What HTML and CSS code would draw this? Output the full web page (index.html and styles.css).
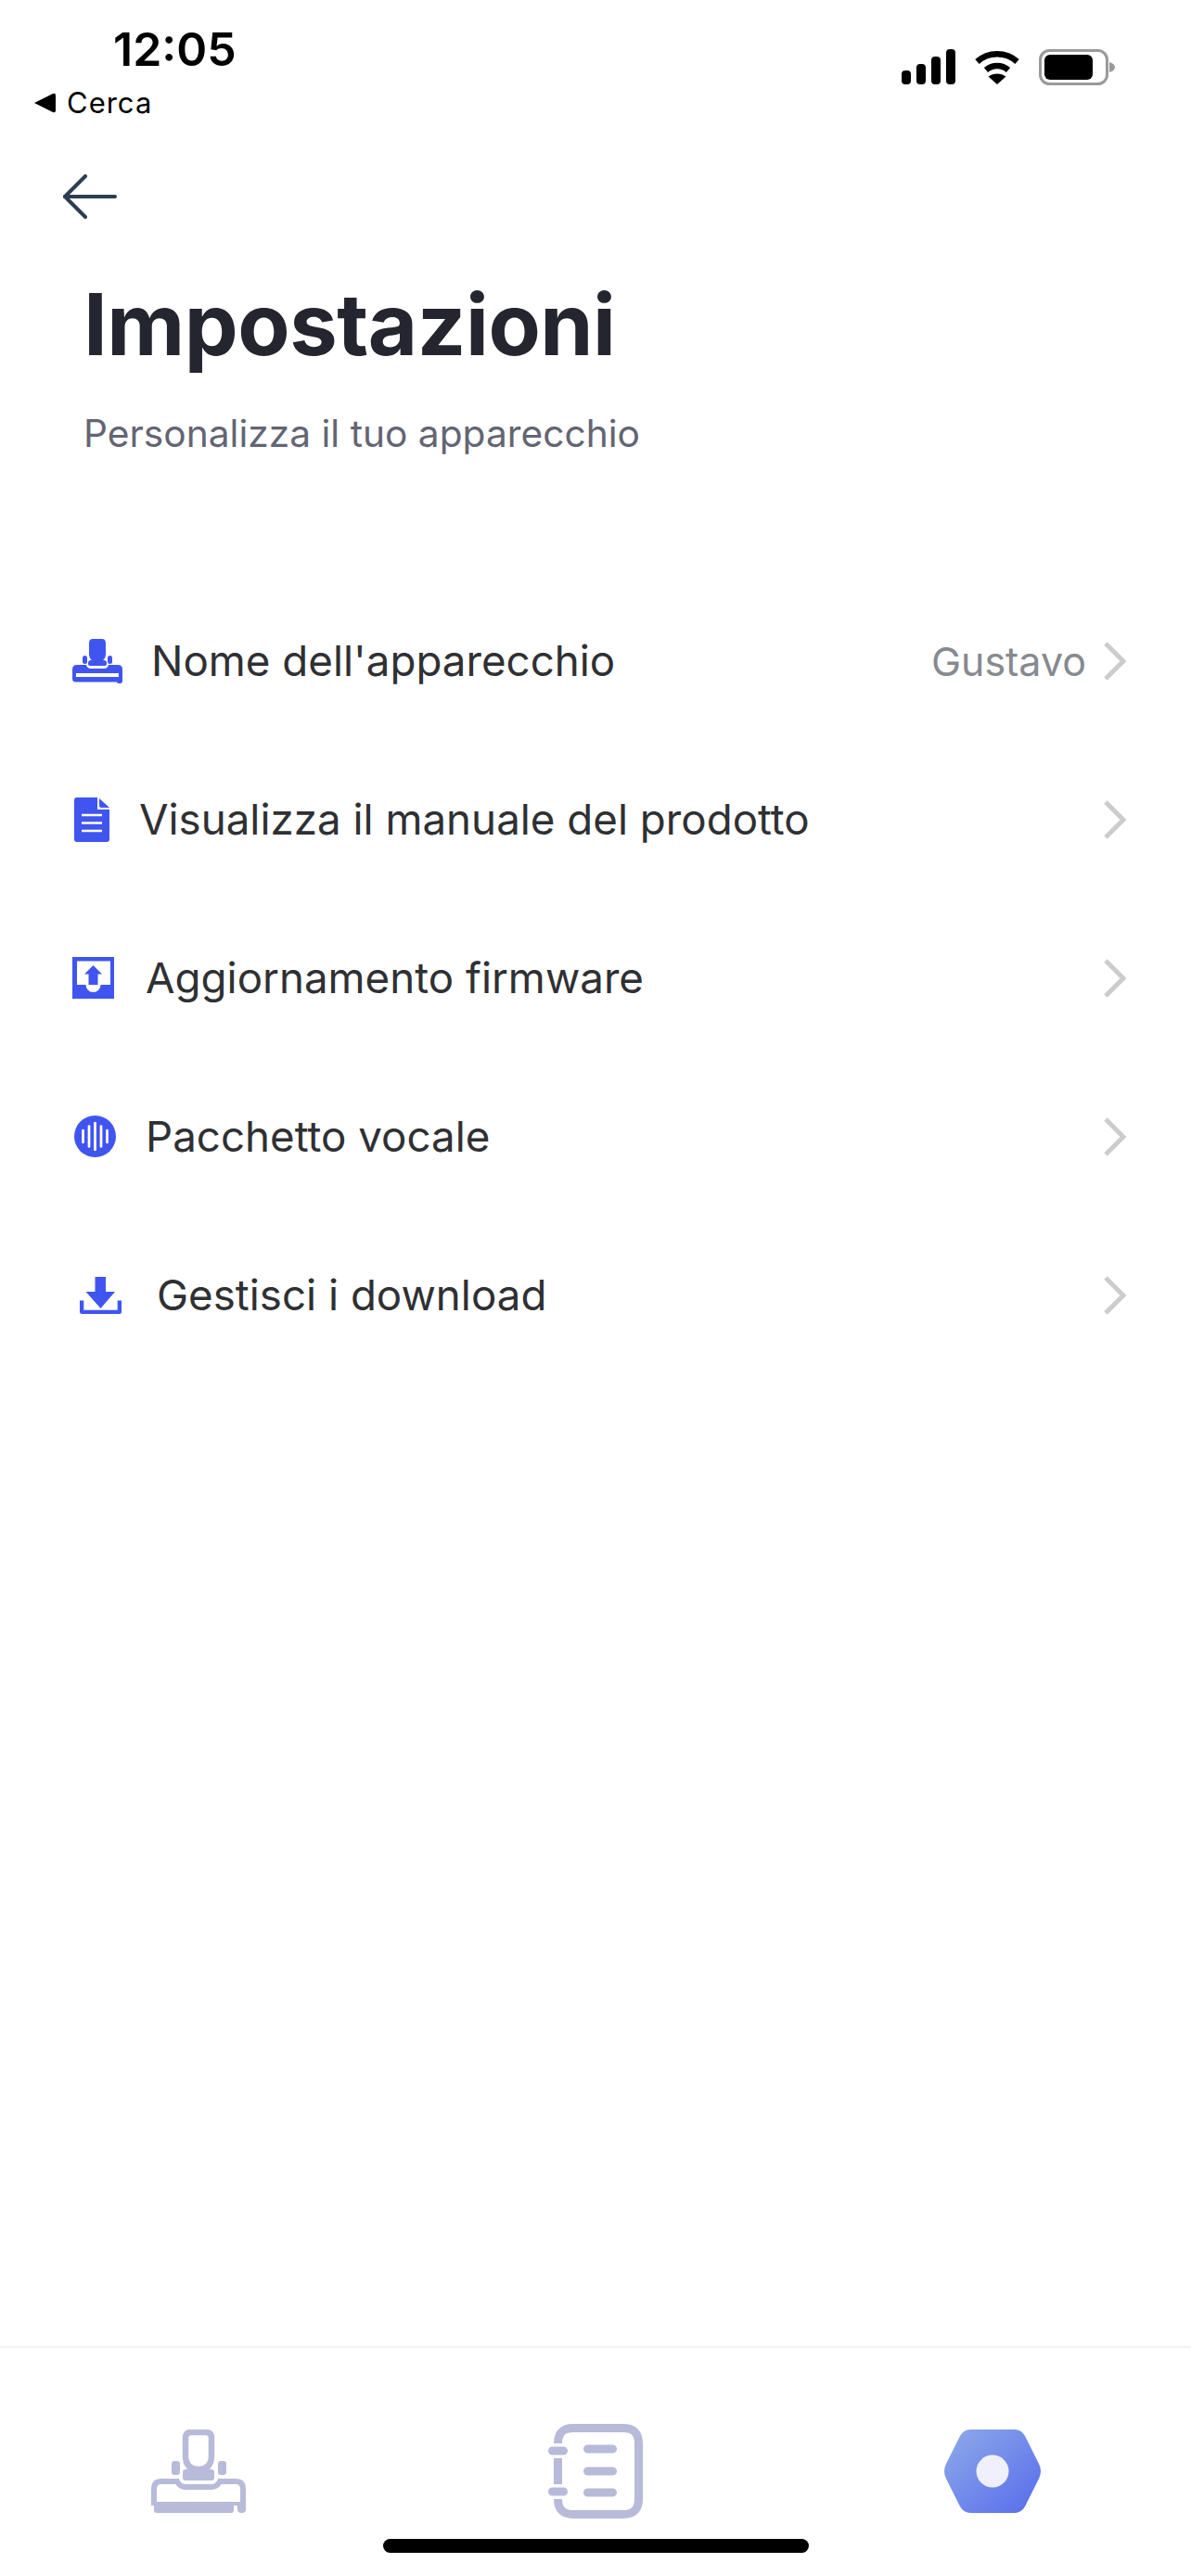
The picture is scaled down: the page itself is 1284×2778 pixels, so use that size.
FILE: index.html
```html
<!DOCTYPE html>
<html lang="it">
<head>
  <meta charset="UTF-8" />
  <meta name="viewport" content="width=device-width, initial-scale=1" />
  <title>Impostazioni</title>
  <link rel="stylesheet" href="styles.css">
</head>
<body>

<div class="app">
  <header class="status">
    <div class="status-left">
      <div class="time">12:05</div>
      <div class="back-app">
        <svg class="back-tri" width="23" height="22" viewBox="0 0 23 22"><path d="M0 11 L20 1 Q23 0 23 3 V19 Q23 22 20 21 Z" fill="#000"/></svg>
        <span>Cerca</span>
      </div>
    </div>
    <div class="status-right">
      <svg width="58" height="38" viewBox="0 0 58 38" fill="#000">
        <rect x="0" y="23" width="10" height="15" rx="4"/>
        <rect x="16" y="16" width="10" height="22" rx="4"/>
        <rect x="32" y="8" width="10" height="30" rx="4"/>
        <rect x="48" y="0" width="10" height="38" rx="4"/>
      </svg>
      <svg width="50" height="38" viewBox="0 0 50 38" fill="none">
        <path d="M3.500 13.500 C15.500 2.500 34.500 2.500 46.500 13.500" stroke="#000" stroke-width="6.500"/>
        <path d="M13 22.500 C20 16.500 30 16.500 37 22.500" stroke="#000" stroke-width="6.500"/>
        <path d="M25 38 L15.500 29.500 C21 25.500 29 25.500 34.500 29.500 Z" fill="#000"/>
      </svg>
      <svg width="82" height="39" viewBox="0 0 82 39" fill="none">
        <rect x="1.500" y="1.500" width="72" height="36" rx="10" stroke="#9a9a9a" stroke-width="3"/>
        <rect x="6" y="6" width="52" height="27" rx="6" fill="#000"/>
        <path d="M76 14 C80 15 82 17 82 19.500 C82 22 80 24 76 25 Z" fill="#9a9a9a"/>
      </svg>
    </div>
  </header>

  <a class="back" href="#">
    <svg width="58" height="48" viewBox="0 0 58 48" fill="none" stroke="#2c3e50" stroke-width="4" stroke-linecap="round" stroke-linejoin="round"><path d="M56 24 H2"/><path d="M24 2 L2 24 L24 46"/></svg>
  </a>

  <div class="heading">
    <h1>Impostazioni</h1>
    <p>Personalizza il tuo apparecchio</p>
  </div>

  <ul class="menu">
    <li class="row row-name">
      <svg class="row-icon" width="54" height="48" viewBox="0 0 54 48" fill="#4055f0">
        <path d="M22 0 H32 Q36 0 36 5 V16 Q36 21 33 23 H21 Q18 21 18 16 V5 Q18 0 22 0 Z"/>
        <rect x="11" y="18" width="5" height="9" rx="2.500"/>
        <rect x="38" y="18" width="5" height="9" rx="2.500"/>
        <path d="M20 23 H34 Q37 23 37 26 V27 Q37 29 34 29 H20 Q17 29 17 27 V26 Q17 23 20 23 Z"/>
        <path fill-rule="evenodd" d="M5 28 H15 Q16 32 20 32 H34 Q38 32 39 28 H49 Q54 28 54 33 V46 Q54 48 51.500 48 Q48 48 48 46.500 H4 Q0 46.500 0 43 V33 Q0 28 5 28 Z M4 37 V41 H50 V37 Z"/>
      </svg>
      <span class="row-label">Nome dell'apparecchio</span>
      <span class="row-value">Gustavo</span>
      <svg class="chevron" width="24" height="42" viewBox="0 0 24 42" fill="none" stroke="#cccccc" stroke-width="5"><path d="M2 2 L21 21 L2 40"/></svg>
    </li>
    <li class="row row-manual">
      <svg class="row-icon" width="38" height="48" viewBox="0 0 38 48">
        <path d="M3 0 H25 V13 H38 V45 Q38 48 35 48 H3 Q0 48 0 45 V3 Q0 0 3 0 Z" fill="#4055f0"/>
        <path d="M27 1 L38 11 H29 Q27 11 27 9 Z" fill="#4055f0"/>
        <path d="M8 19 H30 M8 27.500 H30 M8 36 H30" stroke="#fff" stroke-width="2.500"/>
      </svg>
      <span class="row-label">Visualizza il manuale del prodotto</span>
      <svg class="chevron" width="24" height="42" viewBox="0 0 24 42" fill="none" stroke="#cccccc" stroke-width="5"><path d="M2 2 L21 21 L2 40"/></svg>
    </li>
    <li class="row row-firmware">
      <svg class="row-icon" width="45" height="45" viewBox="0 0 45 45">
        <rect width="45" height="45" fill="#4055f0"/>
        <path d="M5 4.500 H41 V30 H30.500 A8 8 0 0 1 14.500 30 H5 Z" fill="#fff"/>
        <path d="M22.500 9 L32 18.500 H27.500 V30 H17.500 V18.500 H13 Z" fill="#4055f0"/>
      </svg>
      <span class="row-label">Aggiornamento firmware</span>
      <svg class="chevron" width="24" height="42" viewBox="0 0 24 42" fill="none" stroke="#cccccc" stroke-width="5"><path d="M2 2 L21 21 L2 40"/></svg>
    </li>
    <li class="row row-voice">
      <svg class="row-icon" width="45" height="45" viewBox="0 0 45 45">
        <circle cx="22.500" cy="22.500" r="22.500" fill="#4055f0"/>
        <path d="M9.500 16 V29 M16 11.500 V33.500 M22.500 8 V37 M29 11.500 V33.500 M35.500 16 V29" stroke="#fff" stroke-width="2.700" stroke-linecap="round"/>
      </svg>
      <span class="row-label">Pacchetto vocale</span>
      <svg class="chevron" width="24" height="42" viewBox="0 0 24 42" fill="none" stroke="#cccccc" stroke-width="5"><path d="M2 2 L21 21 L2 40"/></svg>
    </li>
    <li class="row row-download">
      <svg class="row-icon" width="45" height="40" viewBox="0 0 45 40" fill="#4055f0">
        <path d="M16.500 0 H28 V16 H38 L22.500 34 L6.500 16 H16.500 Z"/>
        <path d="M0 25.500 H4.300 V35.700 H40.700 V25.500 H45 V37.500 Q45 40 42.500 40 H2.500 Q0 40 0 37.500 Z"/>
      </svg>
      <span class="row-label">Gestisci i download</span>
      <svg class="chevron" width="24" height="42" viewBox="0 0 24 42" fill="none" stroke="#cccccc" stroke-width="5"><path d="M2 2 L21 21 L2 40"/></svg>
    </li>
  </ul>

  <nav class="tabbar">
    <a class="tab" href="#">
      <svg width="102" height="90" viewBox="0 0 102 90" fill="none">
        <path d="M43 3 H59 Q65 3 65 9 V28 Q65 43 51 43 Q37 43 37 28 V9 Q37 3 43 3 Z" stroke="#b7bad9" stroke-width="6.500" stroke-linejoin="round"/>
        <rect x="22" y="34" width="9" height="15" rx="3" fill="#b7bad9"/>
        <rect x="72" y="34" width="9" height="15" rx="3" fill="#b7bad9"/>
        <path d="M37 43 H65 Q68 43 68 46 V52 Q68 55 65 55 H37 Q34 55 34 52 V46 Q34 43 37 43 Z" fill="#b7bad9"/>
        <path d="M3 80 V64 Q3 56 11 56 H28 Q31 62 37 62 H65 Q71 62 74 56 H91 Q99 56 99 64 V80" stroke="#b7bad9" stroke-width="6"/>
        <path d="M0 78 H102 V86 Q102 90 98 90 Q93 90 93 86 V82 H89 V87 Q89 90 86 90 H6 Q3 90 3 87 V82 H0 Z" fill="#b7bad9"/>
      </svg>
    </a>
    <a class="tab" href="#">
      <svg width="102" height="102" viewBox="0 0 102 102" fill="none">
        <path d="M10.500 21 Q10.500 4.500 27 4.500 H81 Q97.500 4.500 97.500 21 V81 Q97.500 97.500 81 97.500 H27 Q10.500 97.500 10.500 81 M10.500 37 V65" stroke="#b7bad9" stroke-width="9"/>
        <path d="M4.500 29 H16.500 M4.500 73 H16.500 M42.500 27 H69.500 M42.500 51 H69.500 M42.500 74 H69.500" stroke="#b7bad9" stroke-width="9" stroke-linecap="round"/>
      </svg>
    </a>
    <a class="tab" href="#">
      <svg width="104" height="90" viewBox="0 0 104 90">
        <defs>
          <linearGradient id="hexFill" x1="0" y1="0" x2="1" y2="1">
            <stop offset="0" stop-color="#8fabe9"/>
            <stop offset="1" stop-color="#566bec"/>
          </linearGradient>
        </defs>
        <path d="M28 0 H76 Q83 0 87 7 L102 37 Q106 45 102 53 L87 83 Q83 90 76 90 H28 Q21 90 17 83 L2 53 Q-2 45 2 37 L17 7 Q21 0 28 0 Z" fill="url(#hexFill)"/>
        <circle cx="52" cy="45" r="17.500" fill="#eff0fb"/>
      </svg>
    </a>
  </nav>

  <div class="home-bar"></div>
</div>

</body>
</html>
```

FILE: styles.css
```css
* { box-sizing: border-box; }
body {
  margin: 0;
  background: #fff;
  font-family: Inter, "Noto Sans", sans-serif;
  color: #2f3033;
}
.app {
  position: relative;
  width: 1284px;
  height: 2778px;
  display: flex;
  flex-direction: column;
  overflow: hidden;
}
.status {
  display: flex;
  justify-content: space-between;
  height: 130px;
  padding: 24px 82px 0 37px;
  color: #000;
}
.time {
  margin-left: 85px;
  font-size: 50px;
  line-height: 58px;
  font-weight: 600;
}
.back-app {
  display: flex;
  align-items: center;
  gap: 12px;
  margin-top: 11px;
  font-size: 31px;
  line-height: 36px;
  letter-spacing: 1px;
}
.status-right {
  display: flex;
  align-items: flex-start;
  gap: 20px;
  padding-top: 29px;
}
.back {
  display: block;
  height: 48px;
  margin: 58px 0 0 68px;
}
.back svg { display: block; }
.heading { padding: 0 0 0 90px; }
h1 {
  margin: 59px 0 0;
  font-size: 92px;
  line-height: 110px;
  font-weight: 700;
  color: #25252f;
  letter-spacing: -0.5px;
}
.heading p {
  margin: 39px 0 0;
  font-size: 40.700px;
  line-height: 48px;
  color: #636574;
}
.menu {
  list-style: none;
  margin: 135px 0 0;
  padding: 0;
}
.row {
  display: flex;
  align-items: center;
  height: 171px;
  padding: 0 70px 0 78px;
  font-size: 45.700px;
}
.row-label { flex: 1; }
.row-value {
  margin-right: 19px;
  color: #868a8f;
  font-size: 43px;
}
.row-icon { flex: none; }
.row-name .row-icon { margin-right: 31px; }
.row-manual { padding-left: 80px; }
.row-manual .row-icon { margin-right: 32px; }
.row-firmware .row-icon { margin-right: 34px; }
.row-voice { padding-left: 80px; }
.row-voice .row-icon { margin-right: 32px; }
.row-download { padding-left: 86px; }
.row-download .row-icon { margin-right: 38px; }
.tabbar {
  margin-top: auto;
  height: 248px;
  display: flex;
  justify-content: space-between;
  align-items: center;
  padding: 82px 162px 62px 163px;
  border-top: 2px solid #f2f2f4;
}
.tab { display: block; }
.tab svg { display: block; }
.home-bar {
  position: absolute;
  left: 413px;
  bottom: 25px;
  width: 459px;
  height: 15px;
  border-radius: 8px;
  background: #000;
}
```
